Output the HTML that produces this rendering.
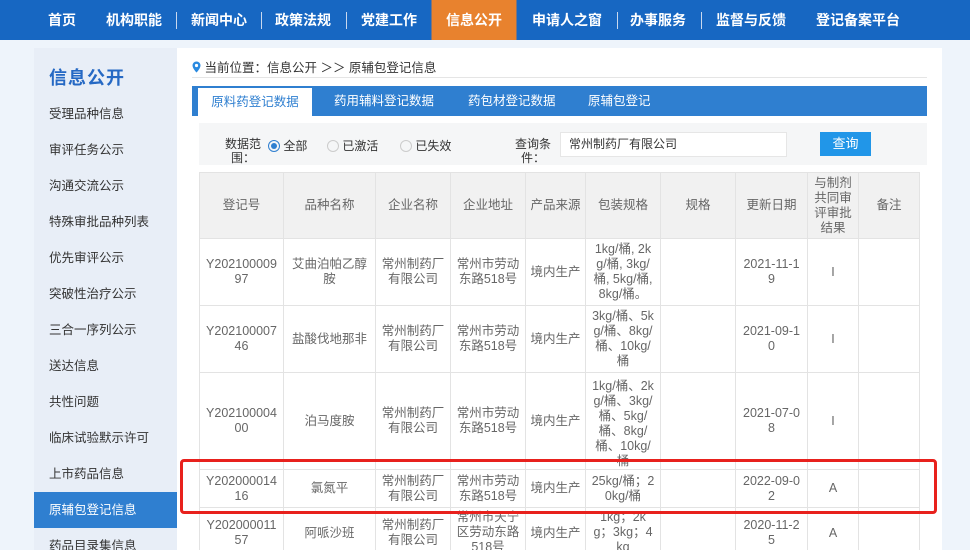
<!DOCTYPE html>
<html><head><meta charset="utf-8"><style>
*{margin:0;padding:0;box-sizing:border-box}
html,body{width:970px;height:550px;overflow:hidden}
body{background:#eef4fb;font-family:"Liberation Sans","Noto Sans CJK SC",sans-serif;font-size:12px;color:#555;position:relative}
.nav{position:absolute;left:0;top:0;width:970px;height:40px;background:#1767c2}
.nav span{position:absolute;top:0;height:40px;line-height:40px;color:#fff;font-weight:bold;font-size:14px;transform:translateX(-50%);white-space:nowrap}
.nav .on{background:#e8822e;width:85px;text-align:center}
.nav i{position:absolute;top:12px;width:1px;height:17px;background:#c9d8ee}
.side{position:absolute;left:34px;top:48px;width:143px;height:502px;background:#e8eef7;overflow:hidden}
.side h2{position:absolute;left:15px;top:16px;font-size:18px;color:#2669c4;letter-spacing:1px}
.side div{position:absolute;left:0;width:143px;height:36px;line-height:36px;padding-left:15px;color:#333;font-size:12.5px}
.side .act{background:#2f7fd0;color:#fff}
.main{position:absolute;left:177px;top:48px;width:765px;height:502px;background:#fff}
.crumb{position:absolute;left:192px;top:57px;font-size:12.5px;color:#333}
.line{position:absolute;left:192px;top:77px;width:735px;height:1px;background:#e5e5e5}
.tabs{position:absolute;left:192px;top:86px;width:735px;height:30px;background:#2f7fd0}
.tabs span{position:absolute;top:0;height:30px;line-height:30px;color:#fff;font-size:12.5px}
.tabs .t1{left:6px;top:2px;height:28px;line-height:28px;background:#fff;color:#2f7fd0;width:114px;text-align:center}
.filter{position:absolute;left:199px;top:123px;width:728px;height:42px;background:#f5f6f7}
.wrap{position:absolute;left:199px;top:172px;width:725px;height:378px;overflow:hidden}
table{border-collapse:collapse;table-layout:fixed}
td{border:1px solid #e3e3e3;text-align:center;vertical-align:middle;font-size:12.5px;color:#666;line-height:15px;padding:0;white-space:nowrap;overflow:hidden}
tr.h td{background:#f1f1f1}
tr.l td{vertical-align:top;padding-top:10px}
.red{position:absolute;left:180px;top:459px;width:757px;height:55px;border:3px solid #e8211d;border-radius:4px}
</style></head><body>
<div class="nav">
<span style="left:62px">首页</span>
<span style="left:134px">机构职能</span><i style="left:176px"></i>
<span style="left:219px">新闻中心</span><i style="left:261px"></i>
<span style="left:303px">政策法规</span><i style="left:346px"></i>
<span style="left:389px">党建工作</span>
<span class="on" style="left:474px">信息公开</span>
<span style="left:567px">申请人之窗</span><i style="left:617px"></i>
<span style="left:658px">办事服务</span><i style="left:701px"></i>
<span style="left:751px">监督与反馈</span>
<span style="left:858px">登记备案平台</span>
</div>
<div class="side">
<h2>信息公开</h2>
<div style="top:48px">受理品种信息</div>
<div style="top:84px">审评任务公示</div>
<div style="top:120px">沟通交流公示</div>
<div style="top:156px">特殊审批品种列表</div>
<div style="top:192px">优先审评公示</div>
<div style="top:228px">突破性治疗公示</div>
<div style="top:264px">三合一序列公示</div>
<div style="top:300px">送达信息</div>
<div style="top:336px">共性问题</div>
<div style="top:372px">临床试验默示许可</div>
<div style="top:408px">上市药品信息</div>
<div class="act" style="top:444px">原辅包登记信息</div>
<div style="top:480px">药品目录集信息</div>
</div>
<div class="main"></div>
<div class="crumb"><svg width="9" height="12" viewBox="0 0 9 12" style="vertical-align:-1px"><path d="M4.5 0.5A4 4 0 0 0 0.5 4.5C0.5 7.5 4.5 11.5 4.5 11.5S8.5 7.5 8.5 4.5A4 4 0 0 0 4.5 0.5Z" fill="#2a8ae0"/><circle cx="4.5" cy="4.5" r="1.6" fill="#fff"/></svg> 当前位置：信息公开 ＞＞ 原辅包登记信息</div>
<div class="line"></div>
<div class="tabs">
<span class="t1">原料药登记数据</span>
<span style="left:142px">药用辅料登记数据</span>
<span style="left:276px">药包材登记数据</span>
<span style="left:396px">原辅包登记</span>
</div>
<div class="filter">
<div style="position:absolute;left:24px;top:14px;width:40px;line-height:14px;text-align:center;color:#333">数据范围：</div>
<div style="position:absolute;left:69px;top:14px;color:#333"><span style="display:inline-block;width:12px;height:12px;border:1px solid #2f7fd0;border-radius:50%;vertical-align:-2px;position:relative"><span style="position:absolute;left:2px;top:2px;width:6px;height:6px;border-radius:50%;background:#2f7fd0"></span></span> 全部</div>
<div style="position:absolute;left:128px;top:14px;color:#333"><span style="display:inline-block;width:12px;height:12px;border:1px solid #ccc;border-radius:50%;vertical-align:-2px"></span> 已激活</div>
<div style="position:absolute;left:201px;top:14px;color:#333"><span style="display:inline-block;width:12px;height:12px;border:1px solid #ccc;border-radius:50%;vertical-align:-2px"></span> 已失效</div>
<div style="position:absolute;left:314px;top:14px;width:40px;line-height:14px;text-align:center;color:#333">查询条件：</div>
<div style="position:absolute;left:361px;top:9px;width:227px;height:25px;background:#fff;border:1px solid #e6e6e6;line-height:23px;padding-left:8px;color:#333">常州制药厂有限公司</div>
<div style="position:absolute;left:621px;top:9px;width:51px;height:24px;background:#2196e8;color:#fff;text-align:center;line-height:24px;font-size:13px">查询</div>
</div>
<div class="wrap">
<table>
<colgroup><col width="84"><col width="92"><col width="75"><col width="75"><col width="60"><col width="75"><col width="75"><col width="72"><col width="51"><col width="61"></colgroup>
<tr class="h" style="height:66px"><td>登记号</td><td>品种名称</td><td>企业名称</td><td>企业地址</td><td>产品来源</td><td>包装规格</td><td>规格</td><td>更新日期</td><td>与制剂<br>共同审<br>评审批<br>结果</td><td>备注</td></tr>
<tr style="height:67px"><td>Y202100009<br>97</td><td>艾曲泊帕乙醇<br>胺</td><td>常州制药厂<br>有限公司</td><td>常州市劳动<br>东路518号</td><td>境内生产</td><td>1kg/桶, 2k<br>g/桶, 3kg/<br>桶, 5kg/桶,<br>8kg/桶。</td><td></td><td>2021-11-1<br>9</td><td>I</td><td></td></tr>
<tr style="height:67px"><td>Y202100007<br>46</td><td>盐酸伐地那非</td><td>常州制药厂<br>有限公司</td><td>常州市劳动<br>东路518号</td><td>境内生产</td><td>3kg/桶、5k<br>g/桶、8kg/<br>桶、10kg/<br>桶</td><td></td><td>2021-09-1<br>0</td><td>I</td><td></td></tr>
<tr style="height:97px"><td>Y202100004<br>00</td><td>泊马度胺</td><td>常州制药厂<br>有限公司</td><td>常州市劳动<br>东路518号</td><td>境内生产</td><td style="vertical-align:top;padding-top:6px">1kg/桶、2k<br>g/桶、3kg/<br>桶、5kg/<br>桶、8kg/<br>桶、10kg/<br>桶</td><td></td><td>2021-07-0<br>8</td><td>I</td><td></td></tr>
<tr style="height:38px"><td>Y202000014<br>16</td><td>氯氮平</td><td>常州制药厂<br>有限公司</td><td>常州市劳动<br>东路518号</td><td>境内生产</td><td>25kg/桶；2<br>0kg/桶</td><td></td><td>2022-09-0<br>2</td><td>A</td><td></td></tr>
<tr class="l" style="height:60px"><td>Y202000011<br>57</td><td style="padding-top:18px">阿哌沙班</td><td>常州制药厂<br>有限公司</td><td style="padding-top:2px">常州市天宁<br>区劳动东路<br>518号</td><td style="padding-top:18px">境内生产</td><td style="padding-top:2px">1kg；2k<br>g；3kg；4<br>kg</td><td></td><td>2020-11-2<br>5</td><td style="padding-top:18px">A</td><td></td></tr>
</table>
</div>
<div class="red"></div>
</body></html>
